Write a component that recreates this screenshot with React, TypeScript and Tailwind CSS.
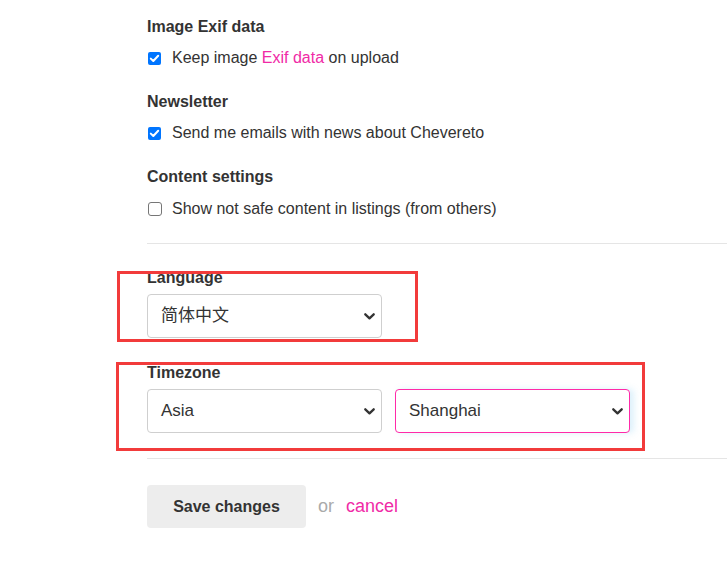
import React from "react";

const Chevron = () => (
  <svg width="11" height="7" viewBox="0 0 11 7" className="shrink-0">
    <path d="M1.3 1.3 L5.5 5.3 L9.7 1.3" fill="none" stroke="#333" strokeWidth="2.3" strokeLinecap="round" strokeLinejoin="round" />
  </svg>
);

const Select = ({ value, pink }: { value: string; pink?: boolean }) => (
  <div
    className={
      "w-[235px] h-[44px] rounded-[4px] bg-white flex items-center justify-between pl-[13px] pr-[6px] text-[17px] text-[#333] " +
      (pink ? "border border-[#ff2aa8] shadow-[4px_0_6px_rgba(120,200,240,0.25)]" : "border border-[#cfcfcf]")
    }
  >
    <span>{value}</span>
    <Chevron />
  </div>
);

const Check = ({ checked }: { checked?: boolean }) =>
  checked ? (
    <span className="w-[13px] h-[13px] ml-px rounded-[2px] bg-[#0075ff] flex items-center justify-center shrink-0">
      <svg width="11" height="9" viewBox="0 0 11 9">
        <path d="M1.8 4.6 L4.3 7 L9.2 1.8" fill="none" stroke="#fff" strokeWidth="2" strokeLinecap="round" strokeLinejoin="round" />
      </svg>
    </span>
  ) : (
    <span className="w-[14px] h-[14px] ml-px rounded-[3px] border border-[#767676] bg-white shrink-0" />
  );

export default function App() {
  return (
    <div
      className="relative w-[727px] h-[563px] bg-white text-[#333] overflow-hidden"
      style={{ fontFamily: '"Liberation Sans", Arial, "Noto Sans CJK SC", sans-serif' }}
    >
      <div className="pl-[147px] pt-[17px]">
        <div className="mb-[24px]">
          <div className="font-bold text-[16px] leading-[20px] mb-[11px]">Image Exif data</div>
          <label className="flex items-center gap-[11px] text-[16px] leading-[20px]">
            <Check checked />
            <span>
              Keep image <span className="text-[#f02aa6]">Exif data</span> on upload
            </span>
          </label>
        </div>
        <div className="mb-[24px]">
          <div className="font-bold text-[16px] leading-[20px] mb-[11px]">Newsletter</div>
          <label className="flex items-center gap-[11px] text-[16px] leading-[20px]">
            <Check checked />
            <span>Send me emails with news about Chevereto</span>
          </label>
        </div>
        <div>
          <div className="font-bold text-[16px] leading-[20px] mb-[12px]">Content settings</div>
          <label className="flex items-center gap-[10px] text-[16px] leading-[20px]">
            <Check />
            <span>Show not safe content in listings (from others)</span>
          </label>
        </div>
        <div className="mt-[24px] h-px bg-[#e5e5e5]" />
        <div className="mt-[24px]">
          <div className="font-bold text-[16px] leading-[20px] mb-[6px]">Language</div>
          <Select value="简体中文" />
        </div>
        <div className="mt-[25px]">
          <div className="font-bold text-[16px] leading-[20px] mb-[6px]">Timezone</div>
          <div className="flex gap-[13px]">
            <Select value="Asia" />
            <Select value="Shanghai" pink />
          </div>
        </div>
        <div className="mt-[25px] h-px bg-[#e5e5e5]" />
        <div className="mt-[26px] flex items-center">
          <button className="w-[159px] h-[43px] rounded-[4px] bg-[#ededed] font-bold text-[16px] text-[#333]">
            Save changes
          </button>
          <span className="ml-[12px] text-[18px] text-[#aaa]">or</span>
          <span className="ml-[12px] text-[18px] text-[#f02aa6]">cancel</span>
        </div>
      </div>

      <div className="absolute left-[117px] top-[271px] w-[301px] h-[71px] border-[3px] border-[#f23b3b] pointer-events-none" />
      <div className="absolute left-[116px] top-[362px] w-[529px] h-[89px] border-[3px] border-[#f23b3b] pointer-events-none" />
    </div>
  );
}
